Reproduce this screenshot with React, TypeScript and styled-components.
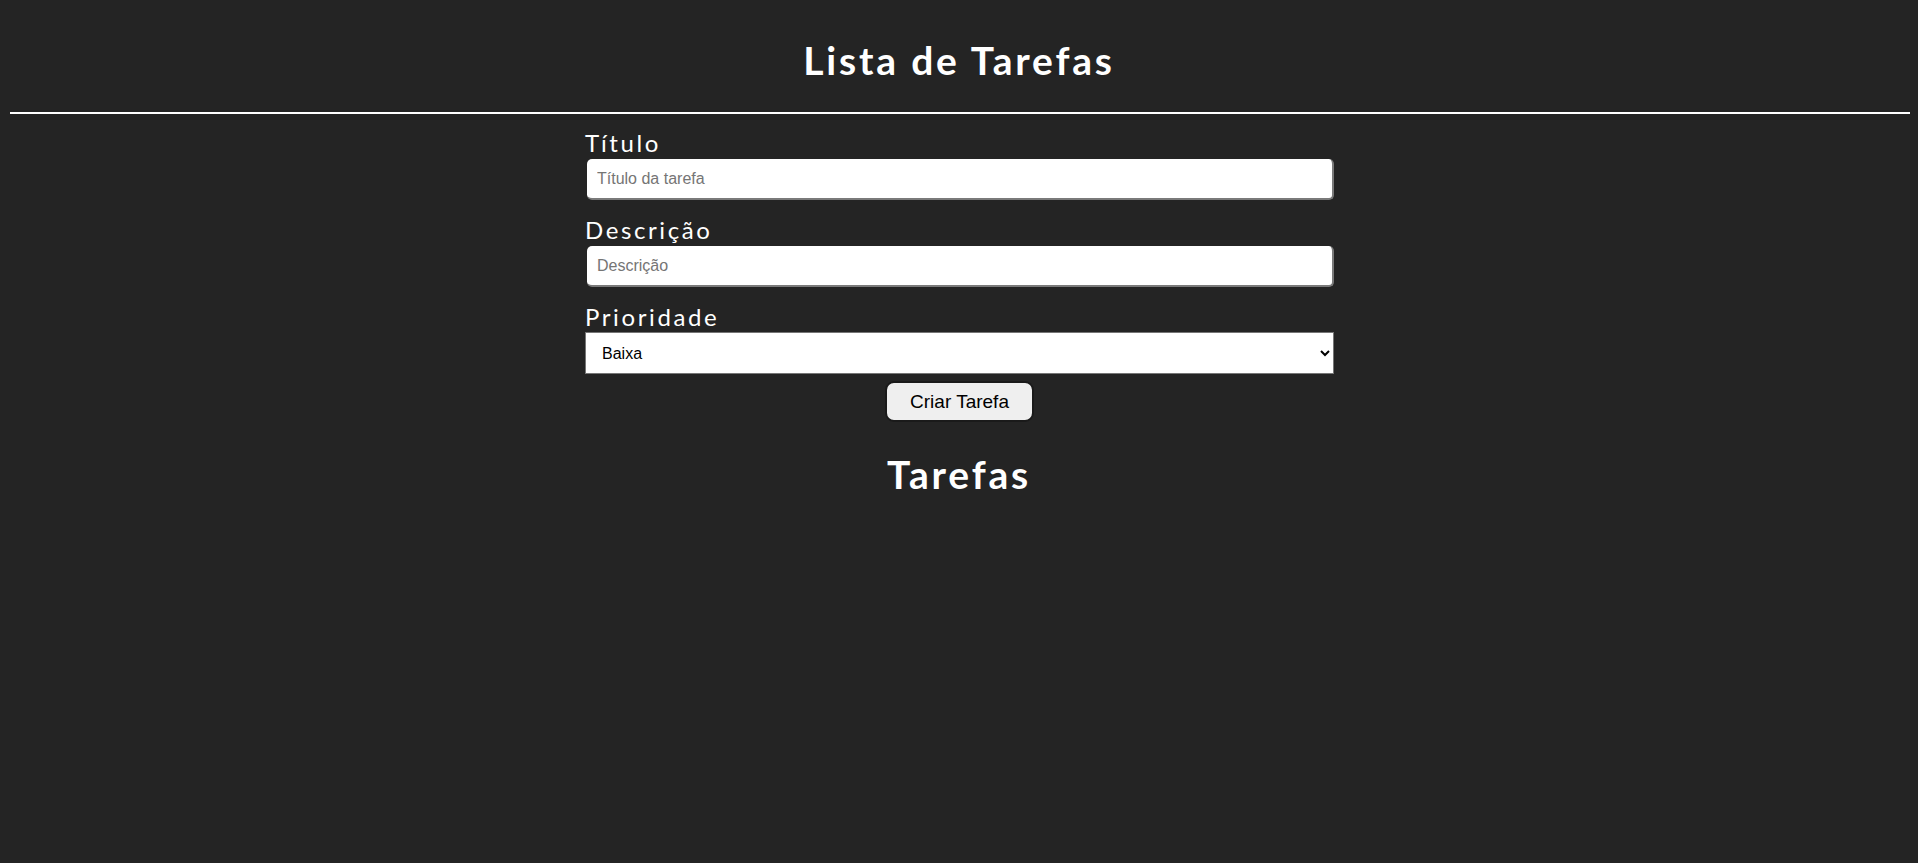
import React from "react";
import styled, { createGlobalStyle } from "styled-components";

const GlobalStyle = createGlobalStyle`
  html, body {
    margin: 0;
    padding: 0;
    background: #242424;
  }
  body {
    font-family: "Lato", "Open Sans", sans-serif;
    color: #ffffff;
  }
  * { box-sizing: border-box; }
`;

const Page = styled.div`
  min-height: 863px;
  background: #242424;
  display: flex;
  flex-direction: column;
`;

const Heading = styled.h1<{ $top: number }>`
  margin: ${(p) => p.$top}px 0 0;
  font-family: "Lato", sans-serif;
  font-weight: 700;
  font-size: 39px;
  line-height: 47px;
  letter-spacing: 2.8px;
  text-align: center;
  color: #ffffff;
`;

const Divider = styled.hr`
  margin: 28px 8px 0 10px;
  height: 2px;
  border: none;
  background: #ffffff;
`;

const Form = styled.form`
  width: 750px;
  margin: -1px auto 0;
  padding-left: 1px;
  display: flex;
  flex-direction: column;
`;

const Label = styled.label`
  display: block;
  margin: 15px 0 2px;
  padding-left: 0;
  font-family: "Lato", sans-serif;
  font-weight: 400;
  font-size: 24px;
  line-height: 29px;
  letter-spacing: 2.6px;
  color: #ffffff;
`;

const TextInput = styled.input`
  display: block;
  width: 747px;
  height: 41px;
  margin-left: 2px;
  padding: 0 10px;
  border-style: solid;
  border-width: 0 2px 2px 0;
  border-color: #7a7a7a;
  border-radius: 5px;
  background: #ffffff;
  font-family: "Liberation Sans", Arial, sans-serif;
  font-size: 16px;
  color: #000;
  outline: none;

  &::placeholder {
    color: #757575;
  }
`;

const Select = styled.select`
  display: block;
  width: 749px;
  height: 42px;
  margin-top: -1px;
  padding: 0 12px;
  border: 1px solid #767676;
  border-radius: 0;
  background: #ffffff;
  font-family: "Liberation Sans", Arial, sans-serif;
  font-size: 16px;
  color: #000;
`;

const SubmitButton = styled.button`
  align-self: center;
  margin-top: 7px;
  height: 41px;
  padding: 0 23px;
  border: 2px solid #1a1a1a;
  border-radius: 9px;
  background: #efefef;
  font-family: "Liberation Sans", Arial, sans-serif;
  font-size: 19px;
  color: #000;
  cursor: pointer;
`;

export default function App() {
  return (
    <Page>
      <GlobalStyle />
      <Heading $top={37}>Lista de Tarefas</Heading>
      <Divider />
      <Form onSubmit={(e) => e.preventDefault()}>
        <Label htmlFor="titulo">Título</Label>
        <TextInput id="titulo" type="text" placeholder="Título da tarefa" />
        <Label htmlFor="descricao">Descrição</Label>
        <TextInput id="descricao" type="text" placeholder="Descrição" />
        <Label htmlFor="prioridade">Prioridade</Label>
        <Select id="prioridade" defaultValue="baixa">
          <option value="baixa">Baixa</option>
          <option value="media">Média</option>
          <option value="alta">Alta</option>
        </Select>
        <SubmitButton type="submit">Criar Tarefa</SubmitButton>
      </Form>
      <Heading as="h2" $top={29}>
        Tarefas
      </Heading>
    </Page>
  );
}
